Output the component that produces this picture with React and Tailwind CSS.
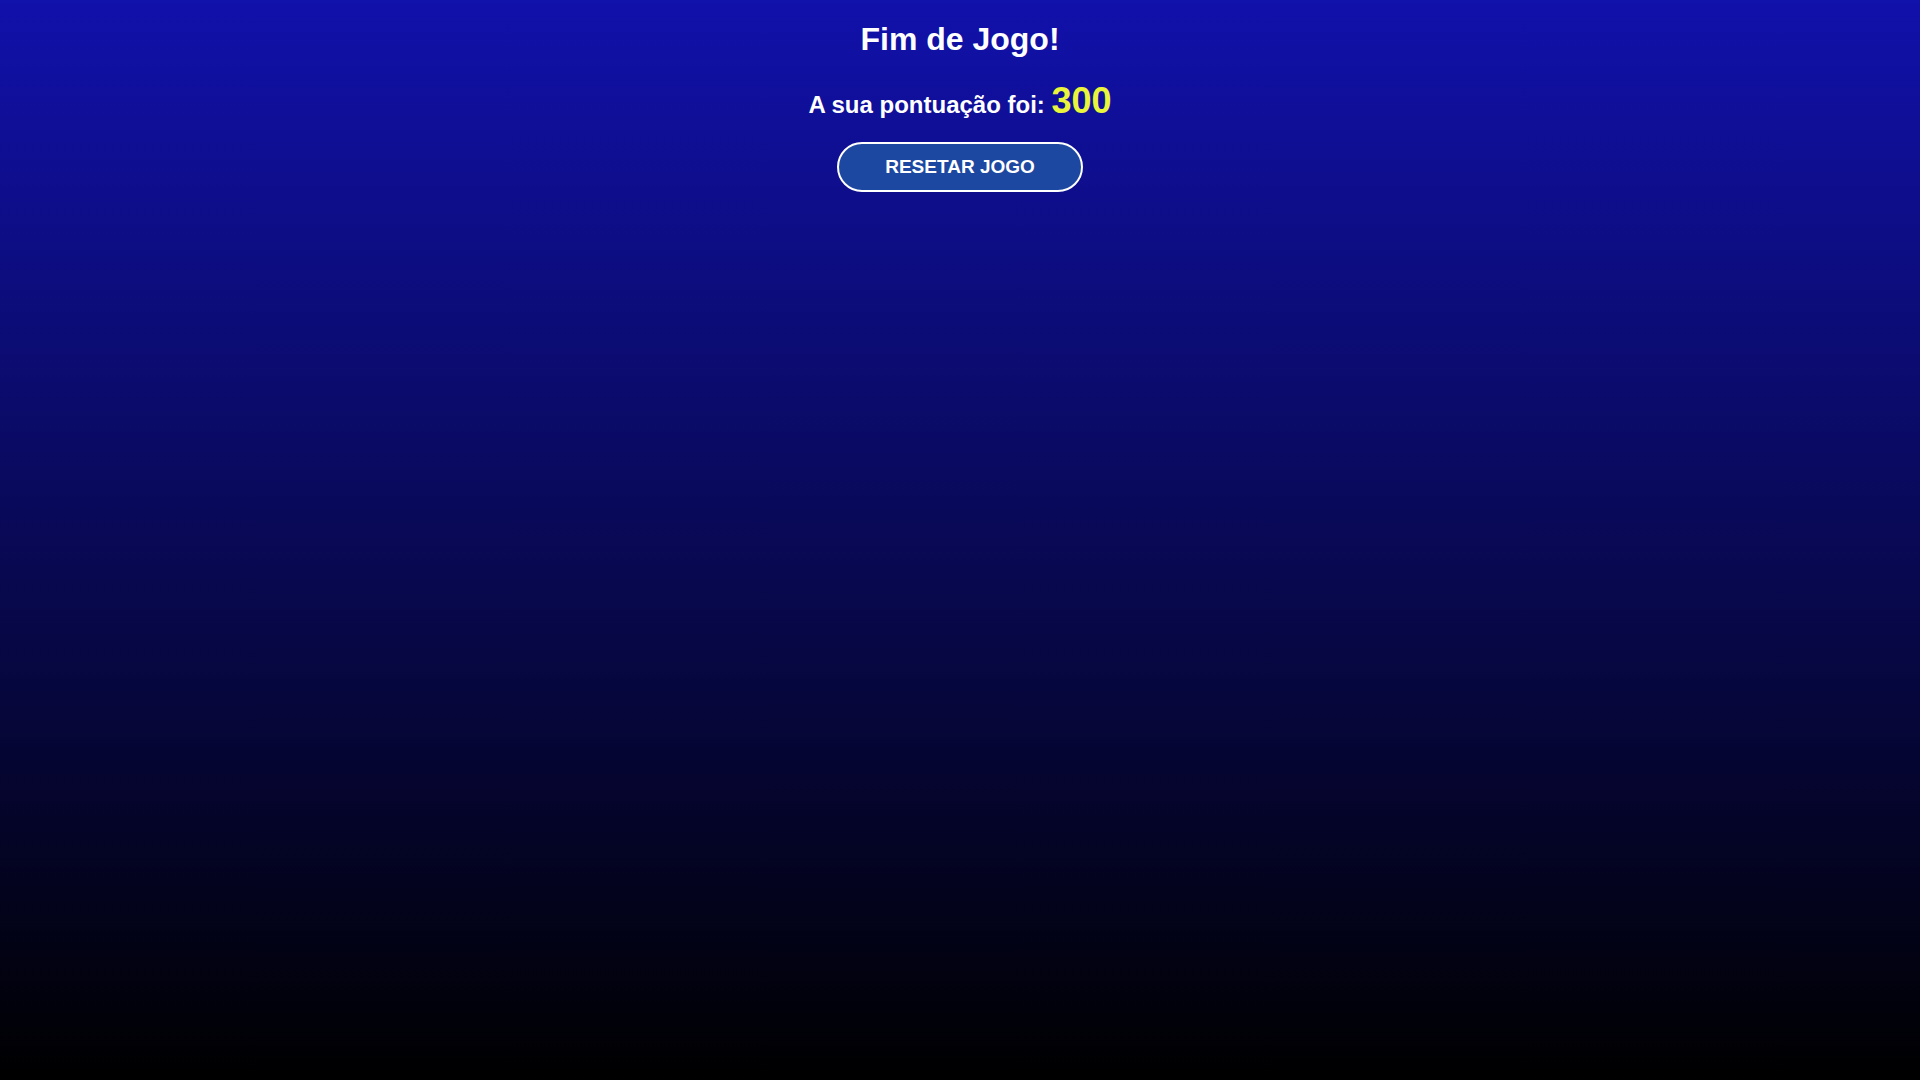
export default function App() {
  return (
    <div className="min-h-screen w-full bg-[linear-gradient(#1111ab,#000)] flex flex-col items-center text-white font-['Liberation_Sans',Arial,sans-serif]">
      <h1 className="mt-[23px] text-[32px] font-bold leading-none">Fim de Jogo!</h1>
      <p className="mt-[28px] text-[24px] font-bold leading-none">
        A sua pontuação foi: <span className="text-[36px] text-[#e9f53a]">300</span>
      </p>
      <button className="mt-[23px] w-[246px] h-[50px] rounded-full border-2 border-white bg-[#1d48a1] text-[19px] font-bold text-white">
        RESETAR JOGO
      </button>
    </div>
  );
}
